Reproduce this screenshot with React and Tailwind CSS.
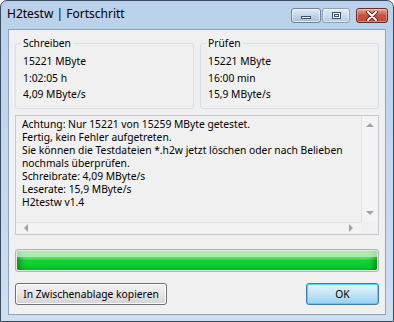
import { useState } from "react";

const font = { fontFamily: '"Noto Sans", "Open Sans", sans-serif' };

function CaptionButtons() {
  return (
    <div className="flex items-start pt-[7px] pr-[5px]">
      <div className="flex h-[15px] w-[30px] items-center justify-center rounded-[3px] border border-[#6d83a0] bg-gradient-to-b from-[#dfe9f5] to-[#aac0da] shadow-[inset_0_0_0_1px_rgba(255,255,255,0.6)]">
        <div className="mt-[3px] h-[3px] w-[10px] border border-[#3c4f6a] bg-white" />
      </div>
      <div className="ml-[1px] flex h-[15px] w-[28px] items-center justify-center rounded-[3px] border border-[#8aa0bb] bg-gradient-to-b from-[#e3ecf6] to-[#b7cbe2] shadow-[inset_0_0_0_1px_rgba(255,255,255,0.5)]">
        <div className="h-[7px] w-[9px] border border-[#3c4f6a] bg-white">
          <div className="m-[1px] h-[3px] w-[5px] border border-[#3c4f6a]" />
        </div>
      </div>
      <div className="ml-[6px] flex h-[15px] w-[32px] items-center justify-center rounded-[3px] border border-[#6b2b22] bg-gradient-to-b from-[#e8a596] via-[#c7523c] to-[#c44a30] shadow-[inset_0_0_0_1px_rgba(255,255,255,0.35)]">
        <svg width="12" height="10" viewBox="0 0 12 10">
          <path d="M2 1 L10 9 M10 1 L2 9" stroke="#3a1a14" strokeWidth="3.6" strokeLinecap="round" />
          <path d="M2 1 L10 9 M10 1 L2 9" stroke="#ffffff" strokeWidth="2" strokeLinecap="round" />
        </svg>
      </div>
    </div>
  );
}

function GroupBox({ title, lines }) {
  return (
    <fieldset className="flex-1 rounded-[3px] border border-[#d5dfe5] pl-[5px] pb-[5px] pt-[3px]">
      <legend className="px-[2px] text-[10.3px] leading-[14px] text-black">{title}</legend>
      <div className="pl-[2px] text-[10.3px] leading-[16.5px] text-black">
        {lines.map((l) => (
          <div key={l}>{l}</div>
        ))}
      </div>
    </fieldset>
  );
}

function Arrow({ dir }) {
  const paths = {
    up: "M0 5 L4 1 L8 5 Z",
    down: "M0 1 L4 5 L8 1 Z",
    left: "M5 0 L1 4 L5 8 Z",
    right: "M1 0 L5 4 L1 8 Z",
  };
  const vertical = dir === "up" || dir === "down";
  return (
    <svg width={vertical ? 8 : 6} height={vertical ? 6 : 8} viewBox={vertical ? "0 0 8 6" : "0 0 6 8"}>
      <path d={paths[dir]} fill="#a3a3a3" />
    </svg>
  );
}

function LogBox() {
  const lines = [
    "Achtung: Nur 15221 von 15259 MByte getestet.",
    "Fertig, kein Fehler aufgetreten.",
    "Sie können die Testdateien *.h2w jetzt löschen oder nach Belieben",
    "nochmals überprüfen.",
    "Schreibrate: 4,09 MByte/s",
    "Leserate: 15,9 MByte/s",
    "H2testw v1.4",
  ];
  return (
    <div className="mx-[6px] mt-[6px] flex h-[120px] flex-col border border-[#c5c9cf] bg-[#f0f0f0]">
      <div className="flex min-h-0 flex-1">
        <div className="flex-1 pl-[6px] pt-[2px] text-[10.3px] leading-[13px] text-black">
          {lines.map((l) => (
            <div key={l} className="whitespace-nowrap">{l}</div>
          ))}
        </div>
        <div className="flex w-[17px] flex-col items-center justify-between border-l border-[#e2e2e2] bg-[#f3f3f3] py-[6px]">
          <Arrow dir="up" />
          <Arrow dir="down" />
        </div>
      </div>
      <div className="flex h-[12px]">
        <div className="flex flex-1 items-center justify-between border-t border-[#e2e2e2] bg-[#f3f3f3] px-[7px]">
          <Arrow dir="left" />
          <Arrow dir="right" />
        </div>
        <div className="w-[17px] bg-[#f0f0f0]" />
      </div>
    </div>
  );
}

function ProgressBar() {
  return (
    <div className="mx-[6px] mt-[14px] h-[23px] rounded-[3px] border border-[#b2b2b2] bg-[#e6e6e6] p-[1px]">
      <div className="relative h-full rounded-[2px] bg-gradient-to-b from-[#c9f3c9] via-[#14d336] to-[#00cc28] shadow-[inset_6px_0_6px_-3px_rgba(0,80,0,0.55),inset_-6px_0_6px_-3px_rgba(0,80,0,0.55)]">
        <div className="absolute inset-x-0 top-0 h-[6px] rounded-t-[2px] bg-[#b3ecb5] opacity-80" />
      </div>
    </div>
  );
}

export default function App() {
  const [copied, setCopied] = useState(false);
  return (
    <div
      className="flex h-[322px] w-[394px] flex-col overflow-hidden rounded-t-[7px] border border-[#3b4b5e] bg-gradient-to-b from-[#b9d1ea] to-[#cddff1]"
      style={font}
    >
      <div className="flex h-[28px] shrink-0 justify-between">
        <div className="pl-[6px] pt-[5px] text-[12px] leading-[16px] text-black">H2testw | Fortschritt</div>
        <CaptionButtons />
      </div>
      <div className="mx-[7px] mb-[6px] flex flex-1 flex-col border border-[#8ea4bd] bg-[#f0f0f0]">
        <div className="flex gap-[6px] px-[6px] pt-[6px]">
          <GroupBox title="Schreiben" lines={["15221 MByte", "1:02:05 h", "4,09 MByte/s"]} />
          <GroupBox title="Prüfen" lines={["15221 MByte", "16:00 min", "15,9 MByte/s"]} />
        </div>
        <LogBox />
        <ProgressBar />
        <div className="mt-[11px] flex justify-between px-[6px]">
          <button
            onClick={() => setCopied(true)}
            className="h-[22px] w-[152px] rounded-[3px] border border-[#707070] bg-gradient-to-b from-[#f2f2f2] via-[#e6e6e6] to-[#d3d3d3] text-[10.3px] leading-[18px] text-black shadow-[inset_0_0_0_1px_#fcfcfc]"
          >
            In Zwischenablage kopieren
          </button>
          <button className="h-[22px] w-[73px] rounded-[3px] border border-[#3c7fb1] bg-gradient-to-b from-[#e5f4fc] via-[#c4e5f6] to-[#98d1ef] text-[10.3px] leading-[18px] text-black shadow-[inset_0_0_0_1px_#48d4f8]">
            OK
          </button>
        </div>
        {copied && <span className="sr-only">kopiert</span>}
      </div>
    </div>
  );
}
